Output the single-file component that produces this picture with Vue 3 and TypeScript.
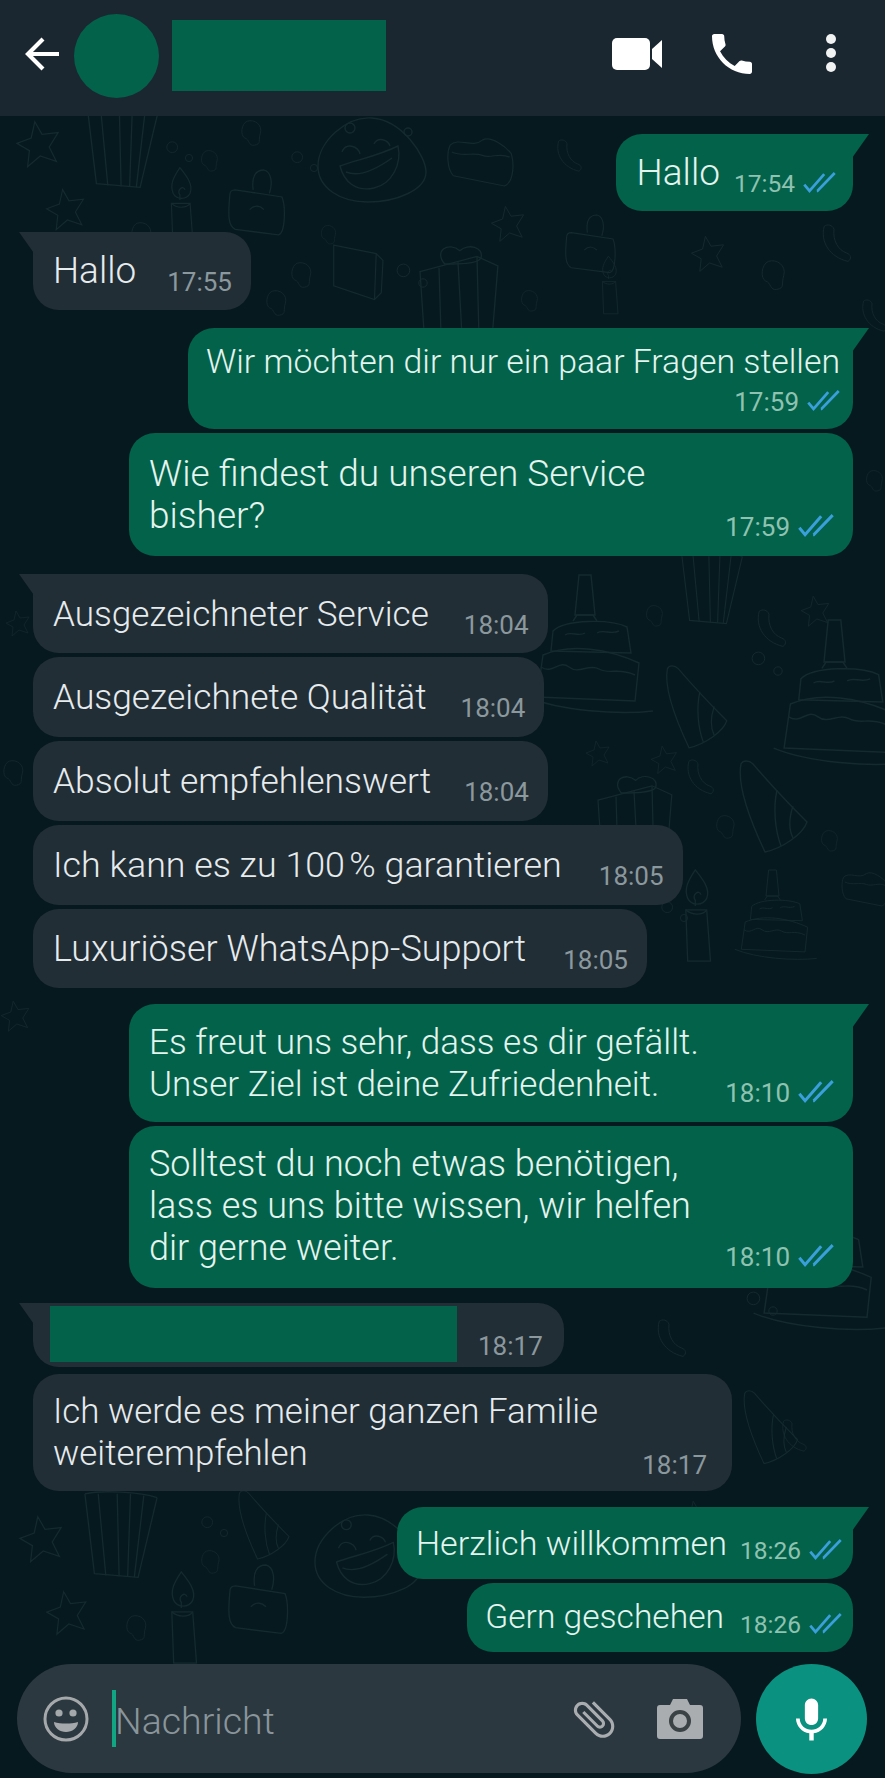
<script setup lang="ts">
interface Msg {
  side: 'in' | 'out';
  text?: string;
  time: string;
  cls: string;
  tail?: boolean;
}

interface Doodle {
  id: string;
  x: number;
  y: number;
  s: number;
  r?: number;
}

const messages: Msg[] = [
  { side: 'out', text: 'Hallo', time: '17:54', cls: 'o1', tail: true },
  { side: 'in', text: 'Hallo', time: '17:55', cls: 'i1', tail: true },
  { side: 'out', text: 'Wir möchten dir nur ein paar Fragen stellen', time: '17:59', cls: 'o2', tail: true },
  { side: 'out', text: 'Wie findest du unseren Service\nbisher?', time: '17:59', cls: 'o3' },
  { side: 'in', text: 'Ausgezeichneter Service', time: '18:04', cls: 'i2', tail: true },
  { side: 'in', text: 'Ausgezeichnete Qualität', time: '18:04', cls: 'i3' },
  { side: 'in', text: 'Absolut empfehlenswert', time: '18:04', cls: 'i4' },
  { side: 'in', text: 'Ich kann es zu 100\u202f% garantieren', time: '18:05', cls: 'i5' },
  { side: 'in', text: 'Luxuriöser WhatsApp-Support', time: '18:05', cls: 'i6' },
  { side: 'out', text: 'Es freut uns sehr, dass es dir gefällt.\nUnser Ziel ist deine Zufriedenheit.', time: '18:10', cls: 'o4', tail: true },
  { side: 'out', text: 'Solltest du noch etwas benötigen,\nlass es uns bitte wissen, wir helfen\ndir gerne weiter.', time: '18:10', cls: 'o5' },
  { side: 'in', time: '18:17', cls: 'i7', tail: true },
  { side: 'in', text: 'Ich werde es meiner ganzen Familie\nweiterempfehlen', time: '18:17', cls: 'i8' },
  { side: 'out', text: 'Herzlich willkommen', time: '18:26', cls: 'o6', tail: true },
  { side: 'out', text: 'Gern geschehen', time: '18:26', cls: 'o7' }
];

// Hintergrund-Doodles, Positionen aus dem Muster abgelesen
const doodles: Doodle[] = [
  { id: 'box', x: 85, y: 100, s: 0.95 },
  { id: 'face', x: 316, y: 116, s: 1 },
  { id: 'star', x: 15, y: 120, s: 0.9 },
  { id: 'star', x: 45, y: 188, s: 0.8 },
  { id: 'candle', x: 168, y: 166, s: 0.85 },
  { id: 'bag', x: 228, y: 170, s: 0.9 },
  { id: 'blob', x: 200, y: 150, s: 0.5 },
  { id: 'blob', x: 130, y: 222, s: 0.6 },
  { id: 'blob', x: 240, y: 120, s: 0.6 },
  { id: 'ring', x: 165, y: 140, s: 0.6 },
  { id: 'ring', x: 290, y: 150, s: 0.6 },
  { id: 'bread', x: 445, y: 135, s: 0.85 },
  { id: 'moon', x: 555, y: 140, s: 0.6 },
  { id: 'star', x: 490, y: 205, s: 0.7 },
  { id: 'cube', x: 332, y: 240, s: 0.85 },
  { id: 'gift', x: 420, y: 245, s: 0.95 },
  { id: 'blob', x: 290, y: 262, s: 0.6 },
  { id: 'blob', x: 320, y: 225, s: 0.45 },
  { id: 'ring', x: 395, y: 262, s: 0.7 },
  { id: 'bag', x: 565, y: 215, s: 0.8 },
  { id: 'candle', x: 600, y: 255, s: 0.6 },
  { id: 'blob', x: 520, y: 290, s: 0.5 },
  { id: 'blob', x: 265, y: 290, s: 0.6 },
  { id: 'star', x: 690, y: 235, s: 0.7 },
  { id: 'blob', x: 760, y: 260, s: 0.7 },
  { id: 'moon', x: 820, y: 225, s: 0.7 },
  { id: 'box', x: 680, y: 550, s: 0.8 },
  { id: 'cake', x: 535, y: 575, s: 1 },
  { id: 'cake', x: 782, y: 620, s: 1.05 },
  { id: 'hat', x: 662, y: 665, s: 0.9 },
  { id: 'blob', x: 645, y: 605, s: 0.5 },
  { id: 'moon', x: 755, y: 610, s: 0.7 },
  { id: 'star', x: 800, y: 595, s: 0.6 },
  { id: 'ring', x: 750, y: 650, s: 0.7 },
  { id: 'gift', x: 598, y: 775, s: 0.9 },
  { id: 'star', x: 585, y: 740, s: 0.5 },
  { id: 'star', x: 650, y: 745, s: 0.55 },
  { id: 'moon', x: 685, y: 760, s: 0.65 },
  { id: 'hat', x: 735, y: 760, s: 1 },
  { id: 'blob', x: 715, y: 815, s: 0.55 },
  { id: 'candle', x: 682, y: 868, s: 0.95 },
  { id: 'cake', x: 740, y: 870, s: 0.65 },
  { id: 'bread', x: 840, y: 870, s: 0.6 },
  { id: 'blob', x: 820, y: 830, s: 0.5 },
  { id: 'ring', x: 660, y: 900, s: 0.6 },
  { id: 'star', x: 5, y: 610, s: 0.5 },
  { id: 'blob', x: 2, y: 760, s: 0.6 },
  { id: 'star', x: 0, y: 1000, s: 0.6 },
  { id: 'moon', x: 860, y: 300, s: 0.6 },
  { id: 'blob', x: 865, y: 470, s: 0.5 },
  { id: 'moon', x: 655, y: 1320, s: 0.7 },
  { id: 'cake', x: 762, y: 1185, s: 1.05 },
  { id: 'blob', x: 690, y: 1250, s: 0.55 },
  { id: 'ring', x: 745, y: 1290, s: 0.7 },
  { id: 'moon', x: 780, y: 1420, s: 0.6 },
  { id: 'hat', x: 740, y: 1390, s: 0.8 },
  { id: 'bread', x: 580, y: 1400, s: 0.75 },
  { id: 'blob', x: 620, y: 1460, s: 0.6 },
  { id: 'star', x: 680, y: 1500, s: 0.6 },
  { id: 'box', x: 83, y: 1490, s: 0.95 },
  { id: 'star', x: 18, y: 1515, s: 0.9 },
  { id: 'star', x: 45, y: 1590, s: 0.85 },
  { id: 'candle', x: 168, y: 1570, s: 0.95 },
  { id: 'bag', x: 228, y: 1565, s: 0.95 },
  { id: 'face', x: 313, y: 1513, s: 0.98 },
  { id: 'hat', x: 235, y: 1490, s: 0.75 },
  { id: 'blob', x: 200, y: 1550, s: 0.55 },
  { id: 'ring', x: 200, y: 1515, s: 0.6 },
  { id: 'blob', x: 125, y: 1615, s: 0.6 }
];

function doodleTransform(d: Doodle) {
  return `translate(${d.x} ${d.y}) scale(${d.s}) rotate(${d.r ?? 0})`;
}
</script>

<template>
  <div class="phone">
    <!-- Hintergrundmuster -->
    <svg class="wallpaper" width="885" height="1778" viewBox="0 0 885 1778" fill="none" aria-hidden="true">
      <defs>
        <g id="box">
          <path d="M2 4 12 88 58 92 78 8" />
          <path d="M16 4 24 90M36 4 38 91M50 4 47 91M64 6 54 92" />
          <path d="M2 4C20 0 60 2 78 8" />
        </g>
        <g id="face">
          <path d="M56 2C86 4 110 40 110 56 110 74 80 86 52 86 24 86 2 72 2 50 2 26 30 0 56 2Z" />
          <path d="M24 50C40 44 62 40 82 30 86 48 76 68 58 72 40 76 28 66 24 50Z" />
          <path d="M30 56C44 62 62 52 76 42" />
          <path d="M26 36C30 26 42 30 44 38M58 28C62 20 72 24 74 30" />
          <circle cx="34" cy="12" r="5" />
          <circle cx="92" cy="16" r="4" />
        </g>
        <g id="star">
          <path d="M22 2 30 16 48 14 38 30 46 46 28 40 14 52 16 34 2 26 18 20Z" />
        </g>
        <g id="candle">
          <path d="M14 2C6 14 2 22 6 32 10 40 22 40 26 32 30 22 22 12 14 2Z" />
          <path d="M14 40V34C10 28 18 22 20 28" />
          <path d="M4 44H26L30 98H6Z" />
          <path d="M4 44C10 50 22 50 26 44" />
        </g>
        <g id="bag">
          <path d="M2 28C0 50 0 62 8 66L56 72C64 70 64 40 60 30L8 22C4 22 2 24 2 28Z" />
          <path d="M28 22C26 8 30 0 40 0 48 2 50 14 46 26" />
          <path d="M24 44C30 38 36 40 40 44" />
        </g>
        <g id="blob">
          <path d="M12 2C24-2 38 8 34 22 30 34 36 40 24 42 14 44 16 32 8 30 0 26 2 6 12 2Z" />
        </g>
        <g id="ring">
          <circle cx="12" cy="12" r="9" />
          <circle cx="40" cy="30" r="6" />
        </g>
        <g id="moon">
          <path d="M6 2C0 24 14 46 40 52 46 48 44 42 38 40 26 36 18 22 20 6 18 0 10-2 6 2Z" />
        </g>
        <g id="bread">
          <path d="M6 12C16 2 32 16 44 6 54 0 72 14 78 22 82 36 80 56 70 60L10 48C2 40 2 20 6 12Z" />
          <path d="M8 20C20 26 34 20 44 24 54 28 64 20 76 26" />
        </g>
        <g id="cube">
          <path d="M2 6 52 16 60 24 58 62 50 70 2 54Z" />
          <path d="M52 16 50 70" />
        </g>
        <g id="gift">
          <path d="M0 28 60 12 82 22 76 96 4 88Z" />
          <path d="M20 24 22 90M40 18 44 92M60 12 62 94" />
          <path d="M26 20C14 6 30-4 42 6 50-2 68 2 64 14 60 20 40 20 26 20Z" />
        </g>
        <g id="hat">
          <path d="M6 4C2 24 14 58 30 92 48 88 68 74 72 62 50 40 30 18 18 4 14 0 8 0 6 4Z" />
          <path d="M42 30C38 48 40 70 46 86M58 46C54 58 54 70 58 78" />
        </g>
        <g id="cake">
          <path d="M44 0 56 0 60 40 40 40Z" />
          <path d="M38 46 42 40H58L62 46" />
          <path d="M18 56C30 44 76 44 92 52L96 78 16 76Z" />
          <path d="M8 80C36 68 74 74 104 88L100 126 2 122Z" />
          <path d="M6 92C18 100 24 84 34 92 44 100 54 88 64 94 74 100 84 92 100 100" />
          <path d="M-8 122C26 136 84 140 118 136" />
          <path d="M30 60C36 56 44 62 50 58M62 58C68 54 76 60 84 56" />
        </g>
      </defs>
      <use v-for="(d, i) in doodles" :key="i" :href="'#' + d.id" :transform="doodleTransform(d)" />
    </svg>

    <header class="topbar">
      <svg class="back" width="36" height="34" viewBox="0 0 36 34" fill="none">
        <path d="M35 17H4M19 2 4 17l15 15" stroke="#fff" stroke-width="4.2" />
      </svg>
      <div class="avatar"></div>
      <div class="name-block"></div>
      <div class="top-actions">
        <svg width="50" height="32" viewBox="0 0 50 32">
          <rect width="38" height="32" rx="5" fill="#fff" />
          <path d="M40 11 50 2V30L40 21Z" fill="#fff" />
        </svg>
        <svg width="40" height="40" viewBox="3 3 18 18">
          <path fill="#fff" d="M6.62 10.79c1.44 2.83 3.76 5.14 6.59 6.59l2.2-2.2c.27-.27.67-.36 1.02-.24 1.12.37 2.33.57 3.57.57.55 0 1 .45 1 1V20c0 .55-.45 1-1 1-9.39 0-17-7.61-17-17 0-.55.45-1 1-1h3.5c.55 0 1 .45 1 1 0 1.25.2 2.45.57 3.57.11.35.03.74-.25 1.02l-2.2 2.2z" />
        </svg>
        <div class="dots"><i></i><i></i><i></i></div>
      </div>
    </header>

    <main class="chat">
      <div
        v-for="m in messages"
        :key="m.cls"
        :class="['msg', m.side, m.cls, { tail: m.tail }]"
      >
        <div v-if="m.text" class="text">{{ m.text }}</div>
        <div v-else class="hidden-text"></div>
        <div class="meta">
          <span class="time">{{ m.time }}</span>
          <svg v-if="m.side === 'out'" class="ticks" viewBox="0 0 31 20" fill="none">
            <path d="M1 12 6 18 20 2M13 18H13.5L30 1" stroke="#3a9fdb" stroke-width="2.6" />
          </svg>
        </div>
      </div>
    </main>

    <footer class="composer">
      <div class="input">
        <svg width="46" height="46" viewBox="0 0 46 46" fill="none">
          <circle cx="23" cy="23" r="21" stroke="#a6a9ab" stroke-width="3" />
          <circle cx="16" cy="17" r="3.6" fill="#a6a9ab" />
          <circle cx="30" cy="17" r="3.6" fill="#a6a9ab" />
          <path d="M11 26C18 28 28 28 35 26 35 32 29 36 23 36 17 36 11 32 11 26Z" fill="#a6a9ab" />
        </svg>
        <span class="caret"></span>
        <span class="placeholder">Nachricht</span>
        <svg class="clip" width="50" height="50" viewBox="0 0 24 24">
          <path fill="#a9adb0" transform="rotate(-45 12 12)" d="M16.5 6v11.5c0 2.21-1.79 4-4 4s-4-1.79-4-4V5c0-1.38 1.12-2.5 2.5-2.5s2.5 1.12 2.5 2.5v10.5c0 .55-.45 1-1 1s-1-.45-1-1V6H10v9.5c0 1.38 1.12 2.5 2.5 2.5s2.5-1.12 2.5-2.5V5c0-2.21-1.79-4-4-4S7 2.79 7 5v12.5c0 3.04 2.46 5.5 5.5 5.5s5.5-2.46 5.5-5.5V6h-1.5z" />
        </svg>
        <svg width="46" height="41" viewBox="0 0 46 41">
          <path fill="#a9adb0" d="M3 7H13L16 1H30L33 7H43C45 7 46 8 46 10V38C46 40 45 41 43 41H3C1 41 0 40 0 38V10C0 8 1 7 3 7Z" />
          <circle cx="23" cy="23" r="9" fill="none" stroke="#3a4246" stroke-width="4" />
        </svg>
      </div>
      <div class="mic">
        <svg width="31" height="43" viewBox="5 2 14 19">
          <path fill="#fff" d="M12 14c1.66 0 2.99-1.34 2.99-3L15 5c0-1.66-1.34-3-3-3S9 3.34 9 5v6c0 1.66 1.34 3 3 3zm5.3-3c0 3-2.54 5.1-5.3 5.1S6.7 14 6.7 11H5c0 3.41 2.72 6.23 6 6.72V21h2v-3.28c3.28-.48 6-3.3 6-6.72h-1.7z" />
        </svg>
      </div>
    </footer>
  </div>
</template>

<style>
body {
  background: #06191e;
}
</style>

<style scoped>
.phone {
  position: relative;
  width: 885px;
  height: 1778px;
  overflow: hidden;
  display: flex;
  flex-direction: column;
  background: #06191e;
  font-family: Roboto, "Liberation Sans", sans-serif;
}

.wallpaper {
  position: absolute;
  inset: 0;
  stroke: #142a2e;
  stroke-width: 1.4;
}

/* Kopfzeile */
.topbar {
  position: relative;
  height: 116px;
  flex: none;
  display: flex;
  align-items: center;
  padding: 0 49px 0 24px;
  box-sizing: border-box;
  background: #1a2730;
}

.back {
  margin-right: 14px;
  margin-top: -8px;
}

.avatar {
  width: 85px;
  height: 84px;
  border-radius: 50%;
  background: #03624a;
  margin-top: -4px;
}

.name-block {
  width: 214px;
  height: 71px;
  margin-left: 13px;
  margin-top: -5px;
  background: #03624a;
}

.top-actions {
  margin-left: auto;
  margin-top: -8px;
  display: flex;
  align-items: center;
  gap: 50px;
}

.dots {
  display: flex;
  flex-direction: column;
  gap: 4px;
  margin-left: 24px;
  margin-top: -2px;
}

.dots i {
  width: 10px;
  height: 10px;
  border-radius: 50%;
  background: #f1f3f3;
}

/* Nachrichten */
.chat {
  position: relative;
  flex: 1;
  display: flex;
  flex-direction: column;
  padding-top: 18px;
}

.msg {
  position: relative;
  display: flex;
  align-items: flex-end;
  box-sizing: border-box;
  border-radius: 26px;
  line-height: 42px;
  margin-top: 4px;
  font-weight: 300;
}

.msg.in {
  align-self: flex-start;
  margin-left: 33px;
  background: #222e35;
  color: #e6ebee;
  padding: 18px 19px 18px 20px;
}

.msg.out {
  align-self: flex-end;
  margin-right: 32px;
  background: #03624a;
  color: #e4f4ef;
  padding: 18px 16px 17px 21px;
}

.msg.tail.in {
  border-top-left-radius: 0;
}

.msg.tail.out {
  border-top-right-radius: 0;
}

.msg.tail::before {
  content: "";
  position: absolute;
  top: 0;
  width: 17px;
  height: 24px;
  background: inherit;
}

.msg.tail.in::before {
  left: -14px;
  clip-path: polygon(0 0, 100% 0, 100% 100%);
}

.msg.tail.out::before {
  right: -16px;
  clip-path: polygon(0 0, 100% 0, 0 100%);
}

.text {
  white-space: pre-line;
}

.meta {
  display: flex;
  align-items: center;
  margin-left: auto;
  margin-bottom: -5px;
  line-height: 30px;
  flex: none;
}

.time {
  font-size: 26px;
  font-weight: 400;
}

.in .time {
  color: #8b989e;
}

.out .time {
  color: #8fc2b1;
}

.ticks {
  width: 33px;
  height: 21px;
  margin-left: 8px;
  margin-top: -3px;
}

.hidden-text {
  width: 407px;
  height: 56px;
  background: #03624a;
}

/* Einzelne Blasen: das Bild ist unterschiedlich skaliert */
.msg.o1 { margin-top: 0; font-size: 37px; padding: 18px 17px 17px 21px; }
.o1 .meta { margin-left: 14px; }
.o1 .time { font-size: 24.5px; }

.msg.i1 { margin-top: 21px; font-size: 36.9px; padding: 18px 19px 18px 20px; }
.i1 .meta { margin-left: 31px; }

.msg.o2 { margin-top: 18px; font-size: 33.8px; flex-direction: column; padding: 13px 13px 12px 18px; }
.o2 .meta { margin: 4px 0 0 auto; }

.msg.o3 { width: 724px; font-size: 37px; padding: 20px 19px 19px 20px; }
.o3 .ticks, .o4 .ticks, .o5 .ticks { width: 36px; height: 23px; }

.msg.i2 { margin-top: 18px; font-size: 35.1px; padding: 19px 19px 18px 20px; }
.i2 .meta { margin-left: 35px; }
.msg.i3 { font-size: 35.35px; padding: 19px 19px 19px 20px; }
.i3 .meta { margin-left: 34px; }
.msg.i4 { font-size: 35.4px; padding: 19px 19px 19px 20px; }
.i4 .meta { margin-left: 33px; }
.msg.i5 { font-size: 35.8px; padding: 19px 19px 19px 20px; }
.i5 .meta { margin-left: 37px; }
.msg.i6 { font-size: 36px; padding: 19px 19px 18px 20px; }
.i6 .meta { margin-left: 37px; }

.msg.o4 { width: 724px; margin-top: 16px; font-size: 35.1px; padding: 17px 19px 17px 20px; }
.o4 .meta, .o5 .meta { margin-bottom: -3px; }
.msg.o5 { width: 724px; font-size: 36px; padding: 17px 19px 19px 20px; }

.msg.i7 { margin-top: 15px; font-size: 26px; padding: 3px 21px 5px 17px; }
.i7 .meta { margin-left: 21px; margin-bottom: 1px; }

.msg.i8 { width: 699px; margin-top: 7px; font-size: 34.9px; padding: 17px 25px 16px 20px; }

.msg.o6 { margin-top: 16px; font-size: 34.1px; padding: 15px 11px 15px 19px; }
.o6 .meta { margin-left: 13px; margin-bottom: -2px; }
.o6 .time, .o7 .time { font-size: 24.5px; }
.msg.o7 { font-size: 33.6px; padding: 13px 11px 14px 18px; }
.o7 .meta { margin-left: 16px; margin-bottom: -2px; }

/* Eingabeleiste */
.composer {
  position: relative;
  flex: none;
  height: 114px;
  display: flex;
  gap: 15px;
  padding-left: 17px;
  box-sizing: border-box;
}

.input {
  width: 724px;
  height: 109px;
  border-radius: 55px;
  background: #2b383f;
  display: flex;
  align-items: center;
  padding: 0 38px 0 26px;
  box-sizing: border-box;
}

.caret {
  width: 4px;
  height: 57px;
  margin-left: 23px;
  background: #12a583;
}

.placeholder {
  font-size: 37.5px;
  font-weight: 300;
  color: #8a959b;
  margin-left: -1px;
  padding-top: 4px;
}

.clip {
  margin-left: auto;
  margin-right: 38px;
}

.mic {
  width: 111px;
  height: 110px;
  border-radius: 50%;
  background: #0a9180;
  display: flex;
  align-items: center;
  justify-content: center;
}
</style>
